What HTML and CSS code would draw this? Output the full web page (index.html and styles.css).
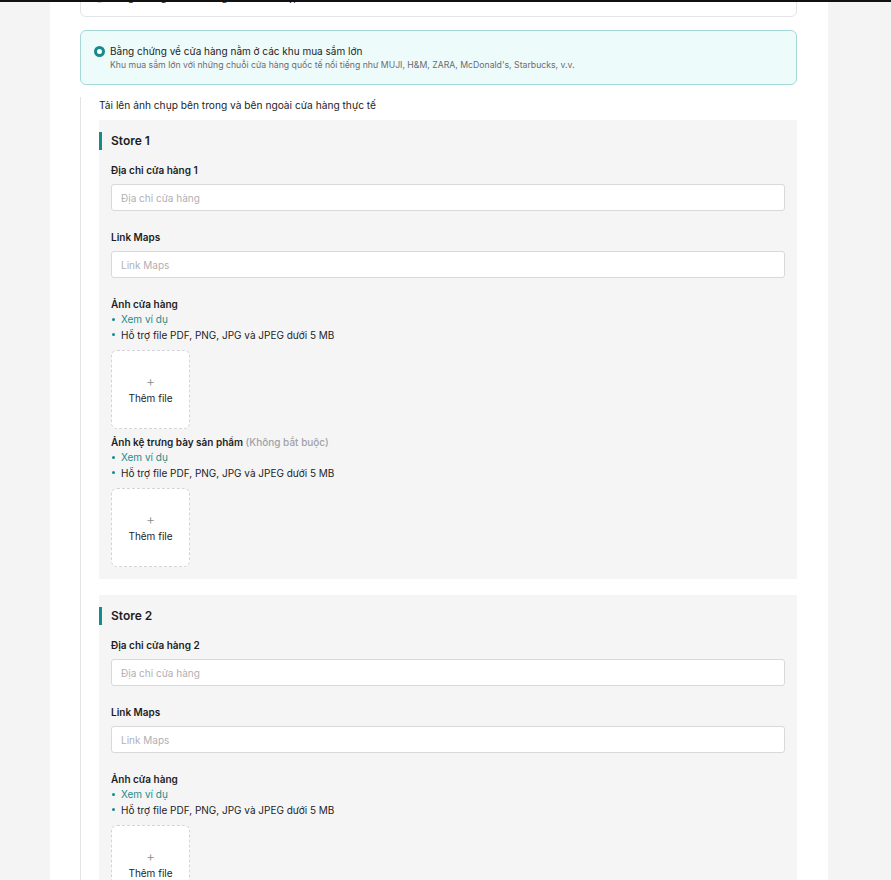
FILE: index.html
```html
<!DOCTYPE html>
<html lang="vi">
<head>
  <meta charset="UTF-8" />
  <meta name="viewport" content="width=device-width, initial-scale=1.0" />
  <title>Bằng chứng cửa hàng</title>
  <link rel="stylesheet" href="styles.css">
</head>
<body>

<div class="topbar"></div>

<div class="page">

  <div class="option">
    <span class="radio"></span>
    <div class="option-text">
      <div class="option-title">Bằng chứng về cửa hàng trên (ảnh chụp)</div>
    </div>
  </div>

  <div class="option active">
    <span class="radio"></span>
    <div class="option-text">
      <div class="option-title">Bằng chứng về cửa hàng nằm ở các khu mua sắm lớn</div>
      <div class="option-desc">Khu mua sắm lớn với những chuỗi cửa hàng quốc tế nổi tiếng như MUJI, H&amp;M, ZARA, McDonald's, Starbucks, v.v.</div>
    </div>
  </div>

  <div class="upload-section">
    <div class="section-hint">Tải lên ảnh chụp bên trong và bên ngoài cửa hàng thực tế</div>

    <div class="store">
      <div class="store-title">Store 1</div>

      <div class="field">
        <div class="label">Địa chỉ cửa hàng 1</div>
        <input class="input" type="text" placeholder="Địa chỉ cửa hàng">
      </div>

      <div class="field">
        <div class="label">Link Maps</div>
        <input class="input" type="text" placeholder="Link Maps">
      </div>

      <div class="field file-field">
        <div class="label">Ảnh cửa hàng</div>
        <ul class="notes">
          <li><a href="#">Xem ví dụ</a></li>
          <li>Hỗ trợ file PDF, PNG, JPG và JPEG dưới 5 MB</li>
        </ul>
        <div class="upload">
          <span class="plus">+</span>
          <span>Thêm file</span>
        </div>
      </div>

      <div class="field file-field tight">
        <div class="label">Ảnh kệ trưng bày sản phẩm <span class="optional">(Không bắt buộc)</span></div>
        <ul class="notes">
          <li><a href="#">Xem ví dụ</a></li>
          <li>Hỗ trợ file PDF, PNG, JPG và JPEG dưới 5 MB</li>
        </ul>
        <div class="upload">
          <span class="plus">+</span>
          <span>Thêm file</span>
        </div>
      </div>
    </div>

    <div class="store">
      <div class="store-title">Store 2</div>

      <div class="field">
        <div class="label">Địa chỉ cửa hàng 2</div>
        <input class="input" type="text" placeholder="Địa chỉ cửa hàng">
      </div>

      <div class="field">
        <div class="label">Link Maps</div>
        <input class="input" type="text" placeholder="Link Maps">
      </div>

      <div class="field file-field">
        <div class="label">Ảnh cửa hàng</div>
        <ul class="notes">
          <li><a href="#">Xem ví dụ</a></li>
          <li>Hỗ trợ file PDF, PNG, JPG và JPEG dưới 5 MB</li>
        </ul>
        <div class="upload">
          <span class="plus">+</span>
          <span>Thêm file</span>
        </div>
      </div>
    </div>
  </div>

</div>

</body>
</html>
```

FILE: styles.css
```css
body {
  margin: 0;
  background: #f4f4f5;
  font-family: Inter, "Noto Sans", sans-serif;
  color: #1d1d1f;
  overflow: hidden;
  height: 100vh;
}
.topbar {
  position: fixed;
  top: 0;
  left: 0;
  right: 0;
  height: 2px;
  background: #111;
  z-index: 5;
}
.page {
  width: 778px;
  margin-left: 50px;
  background: #fff;
  min-height: 100vh;
  padding: 0 31px 40px 30px;
  box-sizing: border-box;
}

/* radio cards */
.option {
  display: flex;
  align-items: flex-start;
  gap: 5px;
  border: 1px solid #e4e4e7;
  border-radius: 6px;
  padding: 13px 13px 12px;
  margin-bottom: 12px;
}
.option:first-child {
  margin-top: -24px;
  padding-bottom: 12px;
  margin-bottom: 13px;
}
.option.active {
  background: #eefbfb;
  border-color: #a6d8d8;
}
.radio {
  width: 9px;
  height: 9px;
  border-radius: 50%;
  border: 1.5px solid #c7c7cc;
  margin-top: 2px;
  flex-shrink: 0;
  background: #fff;
}
.option.active .radio {
  border: 3.5px solid #178a8a;
  width: 5px;
  height: 5px;
}
.option-title {
  font-size: 10px;
  line-height: 14px;
}
.option-desc {
  font-size: 8.7px;
  line-height: 14px;
  color: #6b6b70;
}

/* upload section */
.upload-section {
  border-left: 1px solid #e4e4e7;
  padding-left: 18px;
}
.section-hint {
  font-size: 10.2px;
  line-height: 16px;
  margin-bottom: 7px;
}
.store {
  background: #f5f5f6;
  padding: 12px 12px 12px 12px;
  margin-bottom: 16px;
}
.store-title {
  border-left: 3px solid #178a8a;
  margin-left: -12px;
  padding-left: 9px;
  font-size: 12px;
  font-weight: 600;
  line-height: 18px;
  margin-bottom: 12px;
}
.field {
  margin-bottom: 18px;
}
.label {
  font-size: 10px;
  font-weight: 600;
  line-height: 16px;
  margin-bottom: 6px;
}
.optional {
  color: #a1a1a6;
  font-weight: 500;
}
.input {
  display: block;
  width: 100%;
  box-sizing: border-box;
  height: 27px;
  border: 1px solid #d9d9dc;
  border-radius: 3px;
  background: #fff;
  padding: 0 9px;
  font-family: inherit;
  font-size: 10px;
}
.input::placeholder {
  color: #b0b0b5;
}
.file-field {
  margin-bottom: 5px;
}
.file-field .label {
  margin-bottom: 0;
}
.notes {
  list-style: none;
  margin: 0;
  padding: 0;
  font-size: 10px;
  line-height: 15.5px;
}
.notes li::before {
  content: "";
  display: inline-block;
  width: 3px;
  height: 3px;
  border-radius: 50%;
  background: #178a8a;
  margin: 0 6px 2px 1px;
  vertical-align: middle;
}
.notes a {
  color: #1d8c8a;
  text-decoration: none;
}
.upload {
  margin-top: 7px;
  width: 79px;
  height: 79px;
  box-sizing: border-box;
  border: 1px dashed #d4d4d8;
  border-radius: 6px;
  background: #fff;
  display: flex;
  flex-direction: column;
  align-items: center;
  justify-content: center;
  font-size: 10px;
  line-height: 14px;
}
.plus {
  color: #8a8a8f;
  font-size: 14px;
  font-weight: 300;
  line-height: 14px;
  margin-bottom: 3px;
}
.tight {
  margin-bottom: 0;
}
```
